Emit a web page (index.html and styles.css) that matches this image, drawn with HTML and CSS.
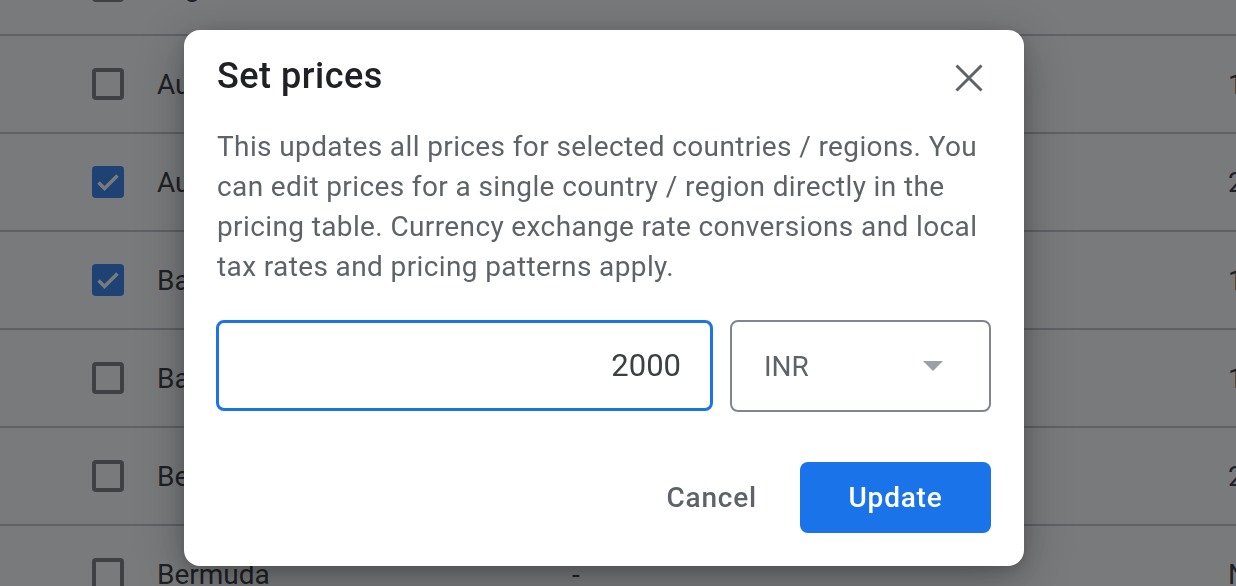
FILE: index.html
```html
<!DOCTYPE html>
<html>
<head>
<meta charset="utf-8">
<link rel="stylesheet" href="styles.css">
</head>
<body>
<div class="table">
  <div class="row"><span class="cb"></span><span class="name">Argentina</span><span class="mid"></span><span class="val">1</span></div>
  <div class="row"><span class="cb"></span><span class="name">Australia</span><span class="mid"></span><span class="val">1</span></div>
  <div class="row"><span class="cb checked"><svg viewBox="0 0 32 32" width="32" height="32"><path d="M6.5 16.5l6 6L25.5 9.5" fill="none" stroke="#fff" stroke-width="3.6"/></svg></span><span class="name">Austria</span><span class="mid"></span><span class="val">2</span></div>
  <div class="row"><span class="cb checked"><svg viewBox="0 0 32 32" width="32" height="32"><path d="M6.5 16.5l6 6L25.5 9.5" fill="none" stroke="#fff" stroke-width="3.6"/></svg></span><span class="name">Bahamas</span><span class="mid"></span><span class="val">1</span></div>
  <div class="row"><span class="cb"></span><span class="name">Bahrain</span><span class="mid"></span><span class="val">1</span></div>
  <div class="row"><span class="cb"></span><span class="name">Belgium</span><span class="mid"></span><span class="val">2</span></div>
  <div class="row"><span class="cb"></span><span class="name">Bermuda</span><span class="mid">-</span><span class="val">N</span></div>
</div>
<div class="scrim"></div>
<div class="dialog">
  <div class="header">
    <h2 class="title">Set prices</h2>
    <button class="close" aria-label="Close"><svg viewBox="0 0 28 28" width="28" height="28"><path d="M1.5 1.5L26.5 26.5M26.5 1.5L1.5 26.5" stroke="#5f6368" stroke-width="3" fill="none"/></svg></button>
  </div>
  <p class="desc">This updates all prices for selected countries / regions. You can edit prices for a single country / region directly in the pricing table. Currency exchange rate conversions and local tax rates and pricing patterns apply.</p>
  <div class="fields">
    <div class="input">2000</div>
    <div class="select"><span>INR</span><span class="arrow"></span></div>
  </div>
  <div class="actions">
    <button class="btn cancel">Cancel</button>
    <button class="btn update">Update</button>
  </div>
</div>
</body>
</html>
```

FILE: styles.css
```css
html, body {
  margin: 0;
  padding: 0;
  width: 1236px;
  height: 586px;
  overflow: hidden;
  background: #ffffff;
  font-family: Roboto, "Liberation Sans", sans-serif;
}

.table {
  margin-top: -62px;
}

.row {
  box-sizing: border-box;
  height: 98px;
  border-bottom: 2px solid #bdc1c6;
  display: flex;
  align-items: center;
  font-size: 28px;
  color: #202124;
}

.cb {
  box-sizing: border-box;
  width: 32px;
  height: 32px;
  margin-left: 92px;
  border: 4px solid #6b6f74;
  border-radius: 4px;
  display: flex;
  align-items: center;
  justify-content: center;
  flex: none;
}

.cb.checked {
  background: #1a73e8;
  border: 0;
}

.name {
  margin-left: 33px;
  width: 415px;
  flex: none;
}

.mid {
  width: 656px;
  flex: none;
}

.val {
  flex: 1;
}

.scrim {
  position: fixed;
  inset: 0;
  background: rgba(32, 33, 36, 0.6);
}

.dialog {
  position: fixed;
  left: 184px;
  top: 30px;
  width: 840px;
  height: 536px;
  box-sizing: border-box;
  background: #fff;
  border-radius: 16px;
  padding: 26px 33px 33px 33px;
  box-shadow: 0 12px 48px rgba(0, 0, 0, 0.3), 0 4px 14px rgba(0, 0, 0, 0.15);
  display: flex;
  flex-direction: column;
}

.header {
  display: flex;
  align-items: center;
  justify-content: space-between;
  height: 40px;
}

.title {
  margin: 0;
  font-size: 36px;
  line-height: 40px;
  font-weight: 500;
  color: #202124;
  letter-spacing: 0.5px;
}

.close {
  border: 0;
  background: none;
  padding: 0;
  margin-right: 8px;
  width: 28px;
  height: 28px;
  display: flex;
  margin-top: 4px;
}

.desc {
  margin: 31px 0 0 0;
  font-size: 28px;
  line-height: 40px;
  color: #5f6368;
  letter-spacing: 0.38px;
}

.fields {
  display: flex;
  gap: 17px;
  margin-top: 33px;
  margin-left: -1px;
}

.input {
  box-sizing: border-box;
  width: 497px;
  height: 91px;
  border: 3px solid #1a73e8;
  border-radius: 8px;
  display: flex;
  align-items: center;
  justify-content: flex-end;
  padding-right: 29px;
  font-size: 31px;
  color: #3c4043;
}

.select {
  box-sizing: border-box;
  width: 261px;
  height: 92px;
  border: 2px solid #80868b;
  border-radius: 8px;
  display: flex;
  align-items: center;
  justify-content: space-between;
  padding: 0 46px 0 32px;
  font-size: 28px;
  color: #5f6368;
}

.arrow {
  width: 0;
  height: 0;
  border-left: 10px solid transparent;
  border-right: 10px solid transparent;
  border-top: 10px solid #9aa0a6;
}

.actions {
  display: flex;
  justify-content: flex-end;
  gap: 19px;
  margin-top: 50px;
}

.btn {
  height: 71px;
  border: 0;
  border-radius: 8px;
  font-family: Roboto, "Liberation Sans", sans-serif;
  font-size: 28px;
  font-weight: 500;
  letter-spacing: 0.8px;
  cursor: pointer;
}

.cancel {
  background: none;
  color: #5f6368;
  padding: 0 24px;
}

.update {
  width: 191px;
  background: #1a73e8;
  color: #fff;
}
```
